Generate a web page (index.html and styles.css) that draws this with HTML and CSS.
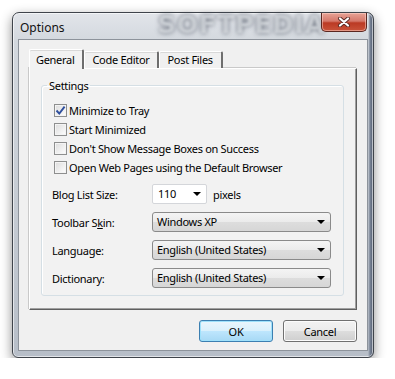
FILE: index.html
```html
<!DOCTYPE html>
<html lang="en">
<head>
    <meta charset="UTF-8">
    <title>Options</title>
    <link rel="stylesheet" href="styles.css">
</head>
<body>
    <div class="window">
        <div class="titlebar">
            <span class="title">Options</span>
            <span class="mark">SOFTPEDIA</span>
            <span class="close">
                <svg width="14" height="10" viewBox="0 0 14 10">
                    <path d="M3 1.5 L11 8.5 M11 1.5 L3 8.5" stroke="#5a2a24" stroke-width="4" stroke-linecap="round"/>
                    <path d="M3 1.5 L11 8.5 M11 1.5 L3 8.5" stroke="#fff" stroke-width="2.2" stroke-linecap="round"/>
                </svg>
            </span>
        </div>

        <div class="client">
            <div class="tabs">
                <span class="tab active">General</span>
                <span class="tab">Code Editor</span>
                <span class="tab">Post Files</span>
            </div>

            <div class="panel">
                <fieldset class="group">
                    <legend>Settings</legend>

                    <div class="check-row">
                        <span class="check">
                            <svg width="11" height="11" viewBox="0 0 11 11">
                                <path d="M1.5 5.5 L4.3 8.6 L9.6 1.6" fill="none" stroke="#2f4f9d" stroke-width="1.9"/>
                            </svg>
                        </span>
                        Minimize to Tray
                    </div>
                    <div class="check-row"><span class="check"></span>Start Minimized</div>
                    <div class="check-row"><span class="check"></span>Don't Show Message Boxes on Success</div>
                    <div class="check-row"><span class="check"></span>Open Web Pages using the Default Browser</div>

                    <div class="field first">
                        <span class="label">Blog List Size:</span>
                        <span class="combo edit">110</span>
                        <span class="unit">pixels</span>
                    </div>
                    <div class="field">
                        <span class="label">Toolbar S<u>k</u>in:</span>
                        <span class="combo">Windows XP</span>
                    </div>
                    <div class="field">
                        <span class="label">Language:</span>
                        <span class="combo">English (United States)</span>
                    </div>
                    <div class="field">
                        <span class="label">Dictionary:</span>
                        <span class="combo">English (United States)</span>
                    </div>
                </fieldset>
            </div>

            <div class="buttons">
                <button class="btn default">OK</button>
                <button class="btn">Cancel</button>
            </div>
        </div>
    </div>
</body>
</html>
```

FILE: styles.css
```css
body {
    margin: 0;
    padding: 12px 0 0 12px;
    background-color: #fff;
    font-family: 'Noto Sans', 'Liberation Sans', sans-serif;
    font-size: 11px;
    letter-spacing: -0.3px;
    color: #000;
}

.window {
    width: 362px;
    height: 346px;
    box-sizing: border-box;
    border: 1px solid #3f444b;
    border-radius: 7px 7px 6px 6px;
    padding: 0 5px 6px;
    display: flex;
    flex-direction: column;
    background:
        linear-gradient(to left, #4f5a6e 0, #7a8597 3px, transparent 5px),
        linear-gradient(to bottom, #e2e5ea 0, #d3d8de 28px, #c4cad2 60%, #b7bec8 100%);
    box-shadow: 0 4px 12px rgba(0, 0, 0, 0.45), inset 0 0 0 1px rgba(255, 255, 255, 0.6);
}

.titlebar {
    height: 27px;
    display: flex;
    align-items: flex-start;
}

.title {
    font-size: 12px;
    letter-spacing: 0;
    margin: 6px 0 0 2px;
    color: #111;
}

.mark {
    margin: 1px -4px 0 auto;
    font-family: 'DejaVu Sans', sans-serif;
    font-weight: bold;
    font-size: 25px;
    letter-spacing: 1px;
    line-height: 22px;
    color: rgba(222, 225, 230, 0.75);
    text-shadow: 0 0 4px rgba(70, 78, 92, 0.85);
    filter: blur(1.1px);
}

.close {
    width: 46px;
    height: 19px;
    box-sizing: border-box;
    margin: 0 1px 0 0;
    border: 1px solid #5b2720;
    border-top: none;
    border-radius: 0 0 5px 5px;
    background: linear-gradient(to bottom, #e8a396 0, #d5786a 45%, #bb3a24 55%, #c9533a 100%);
    box-shadow: inset 0 0 0 1px rgba(255, 220, 210, 0.5);
    display: flex;
    align-items: center;
    justify-content: center;
    position: relative;
}

.client {
    flex: 1;
    border: 1px solid #8d939b;
    background-color: #f0f0f0;
    padding: 9px 10px 8px 10px;
    display: flex;
    flex-direction: column;
}

.tabs {
    display: flex;
    align-items: flex-end;
    height: 19px;
    position: relative;
    z-index: 1;
}

.tab {
    height: 17px;
    box-sizing: border-box;
    padding: 0 8px 0 7px;
    line-height: 16px;
    border-top: 1px solid #fff;
    border-left: 1px solid #fff;
    border-right: 2px solid #6e6e6e;
    border-radius: 2px 2px 0 0;
    background-color: #f0f0f0;
    box-shadow: inset 0 1px 0 #d8d8d8;
}

.tab.active {
    height: 20px;
    margin-bottom: -1px;
    padding: 2px 8px 0 6px;
    background-color: #f2f2f2;
}

.panel {
    height: 242px;
    box-sizing: border-box;
    border-top: 1px solid #fff;
    border-left: 1px solid #fff;
    border-right: 1px solid #5f5f5f;
    border-bottom: 1px solid #5f5f5f;
    box-shadow: inset -1px -1px 0 #a0a0a0, -1px -1px 0 #c9c9c9;
    background-color: #f2f2f2;
    padding: 9px 12px 13px 11px;
}

.group {
    margin: 0;
    height: 100%;
    box-sizing: border-box;
    border: 1px solid #d5dfe5;
    border-radius: 3px;
    box-shadow: 1px 1px 0 #fff inset;
    padding: 8px 11px 0 11px;
}

.group legend {
    padding: 0 2px;
    margin-left: -6px;
    line-height: 15px;
}

.check-row {
    height: 19px;
    display: flex;
    align-items: center;
}

.check {
    width: 13px;
    height: 13px;
    box-sizing: border-box;
    margin: 0 2px 0 1px;
    border: 1px solid #8e8f8f;
    background: linear-gradient(135deg, #dcdcdc 0, #f4f4f4 70%, #fff 100%);
    box-shadow: inset 0 0 0 1px #f4f4f4;
    display: flex;
    align-items: center;
    justify-content: center;
}

.field {
    height: 20px;
    margin-top: 8px;
    display: flex;
    align-items: center;
}

.field.first {
    margin-top: 7px;
}

.label {
    width: 100px;
    margin-left: -1px;
}

.combo {
    width: 179px;
    height: 20px;
    box-sizing: border-box;
    padding: 0 4px;
    line-height: 18px;
    border: 1px solid #8a8a8a;
    border-radius: 3px;
    background: linear-gradient(to bottom, #f4f4f4 0, #ebebeb 50%, #dddddd 51%, #d6d6d6 100%);
    position: relative;
}

.combo::after {
    content: '';
    position: absolute;
    right: 5px;
    top: 7px;
    border-left: 4px solid transparent;
    border-right: 4px solid transparent;
    border-top: 4px solid #000;
}

.combo.edit {
    width: 55px;
    border-color: #d4d6da;
    border-radius: 2px;
    background: #fff;
    padding-left: 5px;
}

.unit {
    margin-left: 6px;
}

.buttons {
    display: flex;
    justify-content: flex-end;
    gap: 10px;
    margin-top: 10px;
}

.btn {
    width: 74px;
    height: 22px;
    padding: 0;
    font-family: inherit;
    font-size: 11px;
    letter-spacing: -0.3px;
    color: #000;
    border: 1px solid #707070;
    border-radius: 3px;
    background: linear-gradient(to bottom, #f2f2f2 0, #ebebeb 50%, #dddddd 51%, #cfcfcf 100%);
    box-shadow: inset 0 0 0 1px #fcfcfc;
}

.btn.default {
    border-color: #3c7fb1;
    background: linear-gradient(to bottom, #eaf6fd 0, #d9f0fc 50%, #bee6fd 51%, #a7d9f5 100%);
    box-shadow: inset 0 0 0 1px #9fe1fb;
}
```
